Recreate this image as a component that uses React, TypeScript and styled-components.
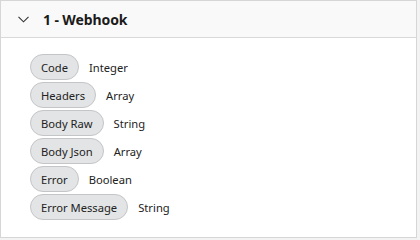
import React from "react";
import styled, { createGlobalStyle } from "styled-components";

const Global = createGlobalStyle`
  html, body { margin: 0; padding: 0; background: #f3f3f3; }
  body { font-family: "Segoe UI", "Noto Sans", "Open Sans", sans-serif; }
`;

const Card = styled.div`
  box-sizing: border-box;
  width: 417px;
  height: 238px;
  border: 1px solid #d6d6d6;
  background: #ffffff;
  display: flex;
  flex-direction: column;
`;

const Header = styled.div`
  box-sizing: border-box;
  height: 37px;
  background: #f9f9f9;
  border-bottom: 1px solid #d9d9d9;
  display: flex;
  align-items: center;
  padding-left: 17px;
  gap: 14px;
`;

const Title = styled.div`
  font-family: "Noto Sans", sans-serif;
  font-weight: 700;
  font-size: 14px;
  letter-spacing: -0.1px;
  color: #1b1b1b;
`;

const Body = styled.div`
  display: flex;
  flex-direction: column;
  gap: 2px;
  padding: 16px 0 0 29px;
`;

const Row = styled.div`
  display: flex;
  align-items: center;
  gap: 10px;
`;

const Chip = styled.span`
  box-sizing: border-box;
  height: 26px;
  padding: 0 10px;
  border: 1px solid #c3c5c6;
  border-radius: 13px;
  background: #e2e4e5;
  display: inline-flex;
  align-items: center;
  font-family: "Noto Sans", sans-serif;
  font-size: 11.2px;
  color: #222;
`;

const TypeLabel = styled.span`
  font-family: "Noto Sans", sans-serif;
  font-size: 11.2px;
  color: #222;
`;

const fields: [string, string][] = [
  ["Code", "Integer"],
  ["Headers", "Array"],
  ["Body Raw", "String"],
  ["Body Json", "Array"],
  ["Error", "Boolean"],
  ["Error Message", "String"],
];

export default function App() {
  return (
    <>
      <Global />
      <Card>
        <Header>
          <svg width="11" height="7" viewBox="0 0 11 7" fill="none">
            <path d="M0.5 0.8 L5.5 5.8 L10.5 0.8" stroke="#333" strokeWidth="1.1" />
          </svg>
          <Title>1 - Webhook</Title>
        </Header>
        <Body>
          {fields.map(([n, t]) => (
            <Row key={n}>
              <Chip>{n}</Chip>
              <TypeLabel>{t}</TypeLabel>
            </Row>
          ))}
        </Body>
      </Card>
    </>
  );
}
